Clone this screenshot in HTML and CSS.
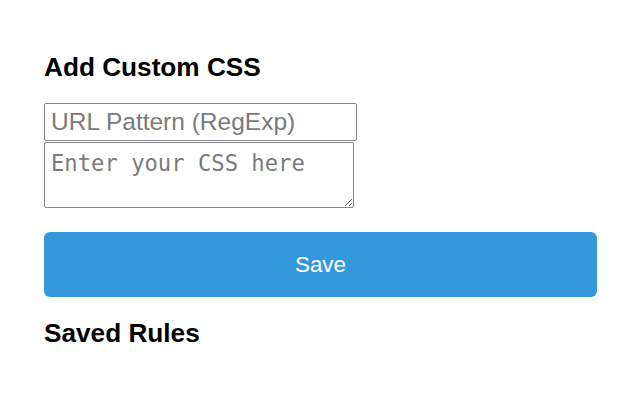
FILE: index.html
```html
<!DOCTYPE html>
<html>
<head>
<meta charset="utf-8">
<link rel="stylesheet" href="styles.css">
</head>
<body>
<div class="panel">
  <h3 class="title">Add Custom CSS</h3>
  <div class="fields">
    <input class="url" type="text" placeholder="URL Pattern (RegExp)">
    <textarea class="css" placeholder="Enter your CSS here"></textarea>
  </div>
  <button class="save">Save</button>
  <h3 class="title saved">Saved Rules</h3>
</div>
</body>
</html>
```
FILE: styles.css
```css
html, body {
  margin: 0;
  padding: 0;
  background: #ffffff;
}
body {
  font-family: "Liberation Sans", Arial, sans-serif;
  color: #000;
}
.panel {
  width: 553px;
  padding: 52px 0 0 44px;
  display: flex;
  flex-direction: column;
}
.title {
  margin: 0;
  font-size: 26.2px;
  font-weight: bold;
  line-height: 30px;
}
.fields {
  margin-top: 21px;
  display: flex;
  flex-direction: column;
  align-items: flex-start;
  gap: 1px;
}
.url {
  box-sizing: border-box;
  width: 313px;
  height: 38px;
  margin: 0;
  padding: 0 6px;
  border: 1.5px solid #858585;
  border-radius: 2px;
  font-family: "Liberation Sans", Arial, sans-serif;
  font-size: 24.5px;
  color: #000;
  outline: none;
}
.url::placeholder {
  color: #7a7a7a;
}
.css {
  box-sizing: border-box;
  width: 310px;
  height: 66px;
  margin: 0;
  padding: 7px 6px 4px;
  border: 1.5px solid #858585;
  border-radius: 2px;
  font-family: "DejaVu Sans Mono", monospace;
  font-size: 22.2px;
  line-height: 26px;
  display: block;
  outline: none;
}
.css::placeholder {
  color: #7a7a7a;
}
.save {
  margin-top: 24px;
  width: 553px;
  height: 65px;
  border: none;
  border-radius: 6px;
  background: #3498db;
  color: #ffffff;
  font-family: "Liberation Sans", Arial, sans-serif;
  font-size: 22.4px;
  padding: 0;
}
.saved {
  margin-top: 21px;
}
```
